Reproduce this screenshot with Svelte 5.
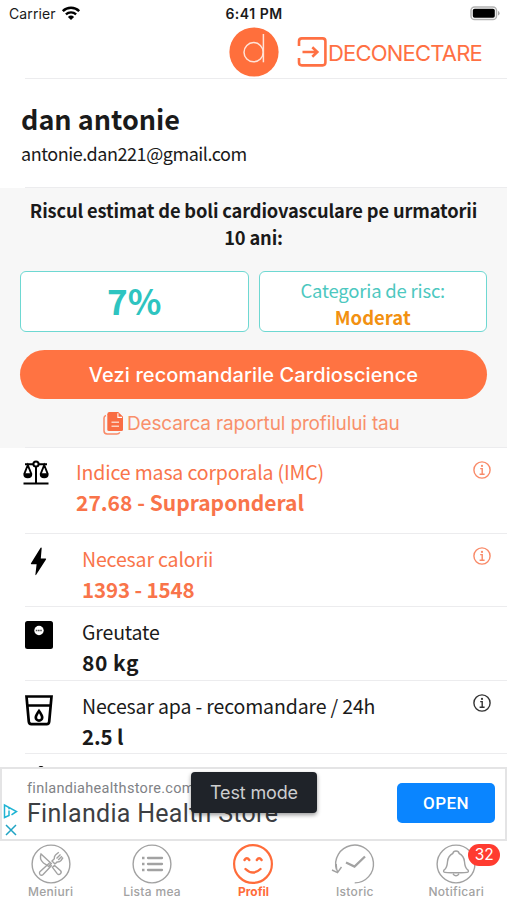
<script>
    const metrics = [
        { icon: 'scales', label: 'Indice masa corporala (IMC)', value: '27.68 - Supraponderal', accent: true, info: true },
        { icon: 'bolt', label: 'Necesar calorii', value: '1393 - 1548', accent: true, info: true },
        { icon: 'weight', label: 'Greutate', value: '80 kg' },
        { icon: 'water', label: 'Necesar apa - recomandare / 24h', value: '2.5 l', info: true }
    ];

    const tabs = [
        { id: 'menus', label: 'Meniuri' },
        { id: 'list', label: 'Lista mea' },
        { id: 'profile', label: 'Profil' },
        { id: 'history', label: 'Istoric' },
        { id: 'alerts', label: 'Notificari', badge: 32 }
    ];

    let active = $state('profile');
</script>

<div class="screen">
    <div class="status">
        <div class="carrier">
            <span>Carrier</span>
            <svg viewBox="0 0 20 15" width="20" height="15" aria-hidden="true">
                <path d="M1.8 5.1a11.7 11.7 0 0 1 16.4 0" fill="none" stroke="#000" stroke-width="2.5" />
                <path d="M4.9 8.4a7.3 7.3 0 0 1 10.2 0" fill="none" stroke="#000" stroke-width="2.3" />
                <path d="M10 14 6.9 10.9a4.5 4.5 0 0 1 6.2 0z" fill="#000" />
            </svg>
        </div>
        <span class="clock">6:41 PM</span>
        <svg class="battery" viewBox="0 0 30 15" width="30" height="15" aria-hidden="true">
            <rect x="1" y="1" width="25.5" height="12.6" rx="3.6" fill="#fff" stroke="#b2b2b2" stroke-width="1.5" />
            <rect x="2.8" y="2.8" width="22" height="9" rx="1.8" fill="#000" />
            <path d="M28 5v4.6q1.6-.6 1.6-2.3T28 5" fill="#a8a8a8" />
        </svg>
    </div>

    <header>
        <svg class="logo" viewBox="0 0 50 50" width="50" height="50" aria-hidden="true">
            <circle cx="25" cy="25" r="24.6" fill="#ff6f3c" />
            <circle cx="24.6" cy="25.2" r="9.6" fill="none" stroke="#ffe3d8" stroke-width="1.5" />
            <path d="M34.4 7v28.3" stroke="#ffe3d8" stroke-width="1.5" />
        </svg>
        <button class="logout">
            <svg viewBox="0 0 30 30" width="30" height="30" aria-hidden="true">
                <path d="M2 9V4.200q0-2.800 2.800-2.800h20.800q2.800 0 2.800 2.800v21.400q0 2.800-2.800 2.800H4.800q-2.800 0-2.800-2.800V21" />
                <path d="M5.500 15h15M15.300 10.300l5 4.700-5 4.700" />
            </svg>
            <span>DECONECTARE</span>
        </button>
    </header>

    <section class="user">
        <h1>dan antonie</h1>
        <p>antonie.dan221@gmail.com</p>
    </section>

    <section class="risk">
        <h2>Riscul estimat de boli cardiovasculare pe urmatorii<br />10 ani:</h2>
        <div class="cards">
            <div class="card score">7%</div>
            <div class="card category">
                <span>Categoria de risc:</span>
                <strong>Moderat</strong>
            </div>
        </div>
        <button class="cta">Vezi recomandarile Cardioscience</button>
        <button class="report">
            <svg viewBox="0 0 21 24" width="21" height="24" aria-hidden="true">
                <path d="M6.500 1h8.700L20 5.800v12.700q0 1.500-1.500 1.500H6q-1.700 0-1.700-1.500V3.200Q4.300 1 6.500 1z" fill="#f96d43" />
                <path d="M14.900 2.200v4.200h4.200" fill="none" stroke="#fff" stroke-width="1.100" />
                <path d="M8.500 11.300h7.500M8.500 15.300h7.500" stroke="#fbd0c0" stroke-width="1.400" />
                <path d="M3 4.500q-2 .5-2 2.500v12.800Q1 23 4.200 23h9.600q2 0 3-1.700" fill="none" stroke="#f98a68" stroke-width="1.500" />
            </svg>
            <span>Descarca raportul profilului tau</span>
        </button>
    </section>

    <ul class="metrics">
        {#each metrics as m (m.icon)}
            <li class={m.icon} class:accent={m.accent}>
                <div class="icon">
                    {#if m.icon === 'scales'}
                        <svg viewBox="0 0 26 26" width="26" height="26" fill="none" stroke="#000" stroke-width="2">
                            <path d="M2 4.300h8M16 4.300h8M13 7v16M.5 23.600h25" />
                            <circle cx="13" cy="4" r="2.600" />
                            <path d="M4.800 5 1.300 14q0 3.400 3.500 3.400T8.300 14zM21.200 5l-3.500 9q0 3.400 3.500 3.400t3.500-3.400z" stroke-width="1.900" />
                            <path d="M1.300 13.300h7q0 4-3.500 4t-3.500-4M17.700 13.300h7q0 4-3.500 4t-3.500-4" fill="#000" stroke="none" />
                        </svg>
                    {:else if m.icon === 'bolt'}
                        <svg viewBox="0 0 17 29" width="17" height="29">
                            <path d="M10.600.8 1 16.300q-.6 1 .6 1h5L5.400 27.600q0 1 .8.2L16 12.600q.6-1.200-.6-1.200h-4.600l.9-10.300q-.2-1.100-1.100-.3" fill="#000" />
                        </svg>
                    {:else if m.icon === 'weight'}
                        <svg viewBox="0 0 28 28" width="28" height="28">
                            <rect width="28" height="28" rx="2.500" fill="#000" />
                            <circle cx="14" cy="9.500" r="4.700" fill="#fff" />
                            <path d="M10.800 9.500h6.400" stroke="#555" stroke-width="1.600" stroke-dasharray="1.600 .6" />
                        </svg>
                    {:else}
                        <svg viewBox="0 0 28 31" width="28" height="31" fill="none" stroke="#000">
                            <path d="M1.500 1.500h25l-2.300 25.200q-.2 2.400-2.500 2.400H6.300q-2.300 0-2.500-2.400zM2.300 10.500h23.400" stroke-width="2.700" />
                            <path d="M14 16q-3.200 4.400-3.200 6.400a3.200 3.200 0 0 0 6.400 0q0-2-3.200-6.400z" stroke-width="2.700" />
                        </svg>
                    {/if}
                </div>
                <div class="text">
                    <span class="label">{m.label}</span>
                    <strong>{m.value}</strong>
                </div>
                {#if m.info}
                    <svg class="info" viewBox="0 0 18 18" width="18" height="18" aria-label="info">
                        <circle cx="9" cy="9" r="8.100" />
                        <path d="M7.200 7.600h2v5.500M6.600 13.200h5" />
                        <circle class="dot" cx="9" cy="4.900" r="1.100" />
                    </svg>
                {/if}
            </li>
        {/each}
        <li class="next">
            <div class="icon">
                <svg viewBox="0 0 28 28" width="28" height="28">
                    <circle cx="16" cy="4" r="3" fill="#000" />
                </svg>
            </div>
        </li>
    </ul>

    <aside class="ad">
        <div class="choices">
            <svg viewBox="0 0 15 15" width="15" height="15" fill="none" stroke="#20b4d4" stroke-width="1.500">
                <path d="M8.500 10.800 13.500 7.500 1.500 1v12.500l4.500-2V6.500M6 3.800v1.400" />
            </svg>
            <svg viewBox="0 0 12 12" width="12" height="12" stroke="#20a4c4" stroke-width="1.500">
                <path d="m1 1 10 10M11 1 1 11" />
            </svg>
        </div>
        <div class="copy">
            <span class="site">finlandiahealthstore.com</span>
            <span class="headline">Finlandia Health Store</span>
        </div>
        <button class="open">OPEN</button>
        <div class="toast">Test mode</div>
    </aside>

    <nav>
        {#each tabs as tab (tab.id)}
            <button class:active={active === tab.id} onclick={() => (active = tab.id)}>
                <span class="glyph">
                    <svg viewBox="0 0 44 40" width="44" height="40" fill="none" stroke="currentColor" stroke-width="1.400">
                        {#if tab.id === 'history'}
                            <path d="M3.500 25.500a18.900 18.900 0 1 1 18.200 13.400" />
                            <path d="m-1 26 5.500 2.700L8.500 23M4.800 28.300Q3.200 25.500 3.200 20" />
                            <path d="m13 18.500 8.500 4L32 12.500" stroke-width="2.300" />
                        {:else}
                            <circle cx="22" cy="20" r="18.900" stroke-width={tab.id === 'profile' ? 2.2 : 1.4} />
                        {/if}
                        {#if tab.id === 'menus'}
                            <path d="M12 10q-2 5 2.500 9l5.200 3.300 2.600-2.800zM23.500 23.300l2-1.900 6.100 5.400q1.300 1.600-.2 3-1.700 1.500-3.200-.2zM26 20l-3-3 2.300-2.300q-.3-2.300 1.200-3.800l3.300-2.700M27.500 14.500l4-4M29.200 16l3.700-3.700M26 20l2-2q2.500.3 4-1.500l2-3M20.500 19l-9.600 8.700q-1.200 1.600.2 3 1.500 1.300 3-.2l8.700-9.300" />
                        {:else if tab.id === 'list'}
                            <path d="M18 14h14M18 20h14M18 26h14" stroke-width="2.300" stroke-linecap="round" />
                            <path d="M12 14h2.500M12 20h2.500M12 26h2.500" stroke-width="2.500" />
                        {:else if tab.id === 'profile'}
                            <path d="M13.500 16q2.300-3.600 4.800 0M25.800 16q2.300-3.600 4.800 0M14.500 25q7.500 7.200 15 0" stroke-width="2.400" stroke-linecap="round" />
                        {:else if tab.id === 'alerts'}
                            <path d="M19 30q3 3.600 6 0M10 28q-1-1.300.5-2.300 2.600-2.200 3-8 .6-6 5.300-8.200Q19.300 7 22 7t3.200 2.500q4.700 2.200 5.300 8.200.4 5.800 3 8Q35 26.700 34 28q-.8.800-12 .8T10 28z" />
                        {/if}
                    </svg>
                    {#if tab.badge}<span class="badge">{tab.badge}</span>{/if}
                </span>
                <span class="caption">{tab.label}</span>
            </button>
        {/each}
    </nav>
</div>

<style>
    :global(body) {
        margin: 0;
        background: #fff;
    }

    .screen {
        --orange: #ff7043;
        --teal: #2ec4c0;
        --line: #ececee;
        --hind: 'Noto Sans CJK JP', 'Noto Sans', sans-serif;
        display: flex;
        flex-direction: column;
        width: 507px;
        height: 900px;
        overflow: hidden;
        color: #1a1a1a;
        font-family: Inter, sans-serif;
        white-space: nowrap;
    }

    h1, h2, p, ul {
        margin: 0;
        padding: 0;
    }

    button {
        padding: 0;
        border: none;
        background: none;
        font: inherit;
        cursor: pointer;
    }

    svg {
        display: block;
        flex: none;
        overflow: visible;
    }

    .status {
        display: grid;
        grid-template-columns: 1fr auto 1fr;
        align-items: center;
        height: 27px;
        padding: 0 7px 0 9px;
        font-size: 14px;
        line-height: 27px;
    }

    .carrier {
        display: flex;
        gap: 5px;
        align-items: center;
        letter-spacing: 0.1px;
    }

    .carrier svg {
        margin-top: -1px;
    }

    .clock {
        margin-left: -1px;
        font-weight: 600;
        letter-spacing: 0.5px;
    }

    .battery {
        justify-self: end;
        margin-top: -1px;
    }

    header {
        display: flex;
        height: 51px;
        margin-left: 25px;
        padding-left: 204px;
        border-bottom: 1px solid var(--line);
    }

    .logout {
        display: flex;
        align-items: center;
        height: 50px;
        margin-left: 18px;
        color: var(--orange);
        font-size: 22px;
        letter-spacing: -0.8px;
    }

    .logout span {
        margin: 2px 0 0 1px;
    }

    .logout path {
        fill: none;
        stroke: var(--orange);
        stroke-width: 2.6;
    }

    .user {
        height: 109px;
        box-sizing: border-box;
        padding: 21px 21px 0;
        font-family: var(--hind);
        background: linear-gradient(var(--line), var(--line)) 25px 100% / 100% 1px no-repeat;
    }

    h1 {
        font-size: 27px;
        line-height: 38px;
    }

    .user p {
        font-size: 18px;
        line-height: 30px;
        letter-spacing: -0.45px;
    }

    .risk {
        height: 260px;
        box-sizing: border-box;
        padding: 9px 20px 0;
        background: linear-gradient(var(--line), var(--line)) 25px 100% / 100% 1px no-repeat, #f7f7f7;
        text-align: center;
    }

    h2 {
        font-family: var(--hind);
        font-size: 18.3px;
        line-height: 27px;
        letter-spacing: -0.15px;
    }

    .cards {
        display: grid;
        grid-template-columns: 1fr 1fr;
        gap: 10px;
        margin-top: 20px;
    }

    .card {
        height: 61px;
        box-sizing: border-box;
        border: 1.500px solid #6ed8d2;
        border-radius: 6px;
        background: #fff;
        color: var(--teal);
        font-family: var(--hind);
    }

    .score {
        font-size: 35px;
        font-weight: 700;
        line-height: 56px;
    }

    .category {
        display: flex;
        flex-direction: column;
        padding-top: 5px;
        font-size: 18.500px;
        line-height: 27px;
    }

    .category span {
        color: #4dc8bf;
        letter-spacing: -0.2px;
    }

    .category strong {
        color: #f29111;
    }

    .cta {
        display: block;
        width: 100%;
        height: 49px;
        margin-top: 18px;
        border-radius: 25px;
        background: #ff7342;
        color: #fff;
        font-size: 20px;
        font-weight: 500;
        letter-spacing: 0.1px;
    }

    .report {
        display: flex;
        align-items: center;
        height: 30px;
        margin: 9px 0 0 83px;
        color: #f9906b;
        font-size: 19px;
        letter-spacing: -0.15px;
    }

    .report span {
        margin: 1px 0 0 3px;
    }

    .metrics {
        flex: 1;
        min-height: 0;
        overflow: hidden;
        list-style: none;
        font-family: var(--hind);
    }

    li {
        display: flex;
        height: 73.400px;
        box-sizing: border-box;
        margin-left: 25px;
        padding: 11px 16px 0 0;
        border-bottom: 1px solid var(--line);
    }

    .icon {
        width: 57px;
        padding-top: 3px;
    }

    .text {
        display: flex;
        flex: 1;
        flex-direction: column;
        margin-top: -2px;
        font-size: 19.500px;
        line-height: 31px;
        letter-spacing: -0.15px;
    }

    .text strong {
        font-size: 20.500px;
        letter-spacing: -0.1px;
    }

    .accent .text {
        color: #f9744a;
    }

    li.scales {
        height: 86px;
    }

    .scales .icon {
        width: 53px;
        margin-left: -2px;
        padding-top: 1px;
    }

    .scales .text {
        margin-top: -3px;
    }

    .scales strong {
        font-size: 21px;
        letter-spacing: 0;
    }

    .weight strong {
        font-size: 21px;
        letter-spacing: 0.5px;
    }

    .bolt .icon {
        box-sizing: border-box;
        padding: 2px 0 0 5px;
    }

    .info {
        margin-top: 2px;
        fill: none;
        stroke: #333;
        stroke-width: 1.400;
    }

    .accent .info {
        stroke: #f98a68;
    }

    .dot {
        fill: #333;
        stroke: none;
    }

    .accent .dot {
        fill: #f98a68;
    }

    li.next {
        padding-top: 8px;
    }

    .ad {
        position: relative;
        display: flex;
        height: 74px;
        box-sizing: border-box;
        padding-right: 10px;
        border: 2px solid #e4e4e5;
        background: #fff;
    }

    .choices {
        width: 25px;
        padding: 35px 0 0 1px;
        box-sizing: border-box;
    }

    .choices svg + svg {
        margin: 5px 0 0 2px;
    }

    .copy {
        display: flex;
        flex: 1;
        flex-direction: column;
        padding-top: 10px;
        font-family: Roboto, sans-serif;
    }

    .site {
        color: #808286;
        font-size: 14.500px;
        line-height: 19px;
        letter-spacing: 0.3px;
    }

    .headline {
        color: #3d3f43;
        font-size: 25px;
        line-height: 31px;
        letter-spacing: 0.3px;
    }

    .open {
        width: 98px;
        height: 40px;
        margin-top: 14px;
        border-radius: 5px;
        background: #0a85ff;
        color: #fff;
        font-family: Roboto, sans-serif;
        font-size: 17px;
        font-weight: 500;
        letter-spacing: 0.4px;
    }

    .toast {
        position: absolute;
        top: 3px;
        left: 189px;
        width: 126px;
        height: 41px;
        border-radius: 4px;
        background: #1f2329;
        box-shadow: 0 2px 4px #0006;
        color: #cdced0;
        font-size: 18px;
        line-height: 41px;
        letter-spacing: -0.15px;
        text-align: center;
    }

    nav {
        display: grid;
        grid-template-columns: repeat(5, 1fr);
        height: 59px;
    }

    nav button {
        display: flex;
        flex-direction: column;
        align-items: center;
        padding-top: 3px;
        color: #a2a2a2;
    }

    .glyph {
        position: relative;
    }

    .badge {
        position: absolute;
        top: 0;
        left: 34px;
        width: 32px;
        height: 22px;
        border-radius: 11px;
        background: #ff3b30;
        color: #fff;
        font-size: 15.500px;
        line-height: 22px;
    }

    .caption {
        font-size: 12px;
        font-weight: 500;
        line-height: 15px;
        letter-spacing: 0.3px;
    }

    .active {
        color: #ff6c3a;
    }

    .active .caption {
        font-weight: 700;
        letter-spacing: 0;
    }
</style>
